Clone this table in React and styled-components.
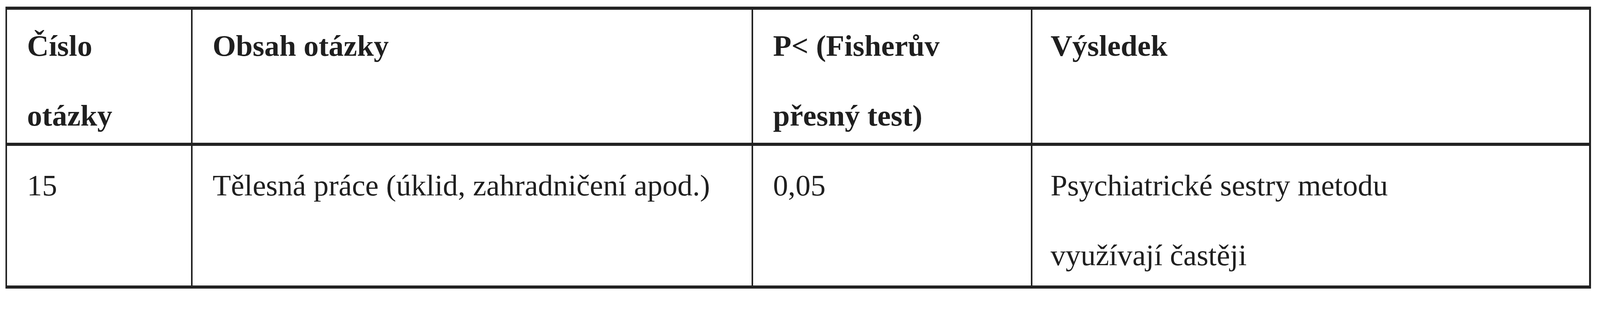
import React from 'react';
import styled, { createGlobalStyle } from 'styled-components';

// the table is drawn for a 7557px wide page; horizontal sizes follow the viewport width
const vw = px => ((px / 7557) * 100).toFixed(4) + 'vw';

const FONT = 142; // px at full width
const LINE = 179; // baseline to baseline

// shift so that the first baseline sits `base` px below the cell top,
// whatever the rendered font size is (Liberation Serif: ascent .891, descent .216)
const firstBaseline = base =>
  `calc(${base - LINE / 2}px - ${((0.3375 * FONT * 100) / 7557).toFixed(4)}vw)`;

const GlobalStyle = createGlobalStyle`
  html, body {
    margin: 0;
    padding: 0;
    background: #fff;
  }
`;

// column share of the table width and left text inset
const columns = [
  { share: 868, pad: 94 },
  { share: 2639, pad: 94 },
  { share: 1311, pad: 94 },
  { share: 2630, pad: 86 },
];

const header = [
  ['Číslo', 'otázky'],
  ['Obsah otázky'],
  ['P< (Fisherův', 'přesný test)'],
  ['Výsledek'],
];

const rows = [
  [
    ['15'],
    ['Tělesná práce (úklid, zahradničení apod.)'],
    ['0,05'],
    ['Psychiatrické sestry metodu', 'využívají častěji'],
  ],
];

const Page = styled.div`
  padding: 17px ${vw(43)} 0 ${vw(26)};
  height: 800px;
  box-sizing: border-box;
`;

// dark background showing through the gaps = the ruling lines
const Table = styled.div`
  display: grid;
  grid-template-columns: ${columns.map(c => c.share + 'fr').join(' ')};
  grid-template-rows: 341px 358px;
  gap: 8px ${vw(8)};
  padding: 8px ${vw(8)};
  background: #222;
`;

const Cell = styled.div`
  background: #fff;
  min-width: 0;
  padding-left: ${p => vw(p.$pad)};
`;

const Lines = styled.div`
  margin-top: ${p => firstBaseline(p.$base)};
  font-family: "Liberation Serif", "Times New Roman", serif;
  font-size: ${vw(FONT)};
  line-height: ${LINE}px;
  font-weight: ${p => (p.$bold ? 700 : 400)};
  color: #1f1f1f;
  white-space: nowrap;
`;

const Line = styled.div``;

export default function App() {
  return (
    <>
      <GlobalStyle />
      <Page>
        <Table>
          {header.map((lines, i) => (
            <Cell key={'h' + i} $pad={columns[i].pad}>
              <Lines $bold $base={118}>
                {lines.map((l, j) => (
                  <Line key={j}>{l}</Line>
                ))}
              </Lines>
            </Cell>
          ))}
          {rows.map((row, r) =>
            row.map((lines, i) => (
              <Cell key={r + '-' + i} $pad={columns[i].pad}>
                <Lines $base={127}>
                  {lines.map((l, j) => (
                    <Line key={j}>{l}</Line>
                  ))}
                </Lines>
              </Cell>
            ))
          )}
        </Table>
      </Page>
    </>
  );
}
